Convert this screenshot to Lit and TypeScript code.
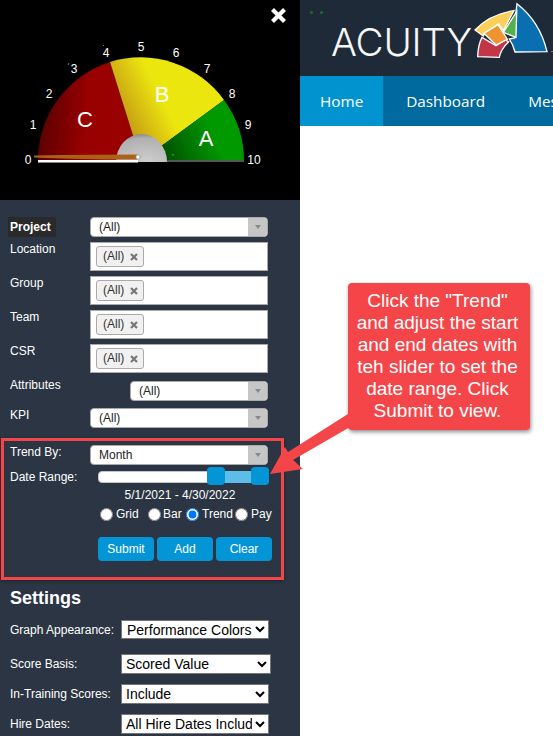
import { LitElement, html, css, svg } from "lit";
import { customElement } from "lit/decorators.js";

@customElement("app-root")
export class AppRoot extends LitElement {
  static styles = css`
    :host { display: block; width: 553px; height: 736px; overflow: hidden; position: relative; background: #fff; font-family: "Liberation Sans", Arial, sans-serif; font-size: 12px; color: #fff; }
    * { box-sizing: border-box; }
    .page { display: flex; width: 553px; height: 736px; overflow: hidden; }
    aside { width: 300px; flex: none; height: 736px; background: #2b3543; overflow: hidden; }
    main { flex: 1; min-width: 0; overflow: hidden; }
    .gauge { display: block; width: 300px; height: 200px; background: #000; }
    .gauge text { font-family: "Liberation Sans", Arial, sans-serif; fill: #fff; text-anchor: middle; }
    .gauge .n { font-size: 12px; }
    .gauge .l { font-size: 22px; }
    .form { padding: 17px 0 0 10px; }
    .row { display: flex; align-items: flex-start; }
    .lab { line-height: 14px; flex: none; width: 80px; }
    .lab.wide { width: 120px; }
    .lab.proj { font-weight: 700; }
    .lab.proj span { display: block; width: 48px; height: 20px; line-height: 20px; background: #2a2a2a; padding-left: 2px; margin-left: -2px; }
    .lab.up { margin-top: -3px; }
    .mt5 { margin-top: 5px; }
    .mt7 { margin-top: 7px; }
    .mt8 { margin-top: 8px; }
    .sel { height: 20px; width: 178px; background: #fff; border: 1px solid #aaa; border-radius: 4px; color: #222; display: flex; align-items: center; padding-left: 8px; position: relative; overflow: hidden; }
    .sel.short { width: 138px; }
    .sel .arr { position: absolute; right: 0; top: 0; bottom: 0; width: 19px; background: #c6c6c6; display: flex; align-items: center; justify-content: center; }
    .sel .arr i { width: 0; height: 0; border: 3px solid transparent; border-top: 4px solid #888; border-bottom: 0; }
    .multi { height: 29px; width: 178px; background: #fff; border: 1px solid #aaa; padding: 3px 5px; }
    .chip { width: 48px; height: 21px; background: #f1f1f1; border: 1px solid #aaa; border-radius: 3px; color: #333; display: flex; align-items: center; justify-content: space-between; padding: 0 5px 2px 6px; }
    .chip svg { display: block; width: 8px; height: 8px; margin-top: 3px; }
    .trend { margin: 10px 0 0 -9px; width: 283px; height: 142px; border: 3px solid #f44649; padding: 4px 0 0 6px; box-shadow: 0 1px 3px rgba(0,0,0,.35); }
    .dr { width: 88px; margin-top: 5px; }
    .slider { width: 171px; height: 18px; position: relative; margin-top: 2px; }
    .track { position: absolute; left: 0; right: 0; top: 3.5px; height: 12px; background: #fff; border: 1px solid #c5c5c5; border-radius: 4px; }
    .fill { position: absolute; left: 118px; width: 45px; top: 3.5px; height: 12px; background: #5dbde9; }
    .h { position: absolute; top: 0; width: 18px; height: 18px; background: #0495d6; border-radius: 4px; }
    .h.a { left: 109px; }
    .h.b { left: 153px; }
    .dates { width: 180px; margin: 3px 0 0 80px; text-align: center; line-height: 14px; }
    .radios { display: flex; align-items: center; height: 16px; margin: 4px 0 0 90px; line-height: 16px; }
    .radios input { margin: 0 3px 0 0; width: 13px; height: 13px; flex: none; }
    .radios span.g { margin-right: 10px; width: 22px; }
    .radios span.b { margin-right: 5px; width: 18px; margin-left: -1px; }
    .radios span.t { margin-right: 3px; width: 30px; }
    .btns { display: flex; gap: 3px; margin: 15px 0 0 88px; }
    .btns span { width: 56px; height: 24px; background: #0495d6; border-radius: 4px; display: flex; align-items: center; justify-content: center; font-size: 12px; }
    h2 { margin: 7px 0 0; font-size: 18px; line-height: 22px; font-weight: 700; }
    .setrow { display: flex; align-items: center; }
    .setrow label { width: 111px; flex: none; line-height: 14px; }
    select { font-family: "Liberation Sans", Arial, sans-serif; font-size: 14px; background: #fff; color: #000; border: 1px solid #767676; border-radius: 0; margin: 0; padding: 0; }
    .s1 { margin-top: 11px; }
    .s1 select { height: 19px; width: 148px; padding-left: 1px; }
    .s2 { margin-top: 15px; }
    .s2 select { height: 20px; width: 149.5px; }
    .s3 { margin-top: 10px; }
    .s3 select { height: 20px; width: 147.5px; }
    header { height: 76px; background: #1f2a38; position: relative; display: flex; align-items: flex-start; }
    .dots { position: absolute; left: 10px; top: 11px; display: flex; gap: 7px; }
    .dots i { width: 3px; height: 3px; border-radius: 50%; background: #0a7a1a; }
    .word { margin: 19px 0 0 31px; font-family: Inter, sans-serif; font-weight: 300; font-size: 38.5px; line-height: 46px; color: #f6f6f6; letter-spacing: -0.2px; }
    .mark { position: absolute; left: 170px; top: 0; width: 83px; height: 64px; }
    nav { height: 50px; background: #00699d; display: flex; align-items: center; font-family: "Open Sans", sans-serif; font-size: 15.3px; white-space: nowrap; }
    nav a { height: 50px; display: flex; align-items: center; padding: 0 21.5px; flex: none; }
    nav a.on { background: #0093d0; padding: 0 20px; margin-right: 1.5px; }
    .callout { position: absolute; left: 348px; top: 283px; width: 182px; height: 147px; background: #f44649; border-radius: 4px; box-shadow: 1px 2px 4px rgba(0,0,0,.45); text-align: center; font-size: 19px; line-height: 22px; padding: 7px 3px 0 0; }
    .arrow { position: absolute; left: 260px; top: 400px; width: 100px; height: 90px; }
    .close { position: absolute; left: 270px; top: 7px; width: 17px; height: 17px; }
  `;

  private sel(v: string, short = false) {
    return html`<div class="sel ${short ? "short" : ""}">${v}<span class="arr"><i></i></span></div>`;
  }

  private multi(name: string) {
    return html`<div class="row mt5"><div class="lab">${name}</div>
      <div class="multi"><div class="chip">(All)<svg viewBox="0 0 8 8"><path d="M1 1L7 7M7 1L1 7" stroke="#777" stroke-width="2.2"/></svg></div></div></div>`;
  }

  private gauge() {
    const nums: [string, number, number][] = [["0",28,164],["1",33,129],["2",49,98],["3",74,73],["4",106,57],["5",141,51],["6",176,57],["7",207,73],["8",232,98],["9",248,129],["10",254,164]];
    return svg`<svg class="gauge" viewBox="0 0 300 200">
      <defs>
        <linearGradient id="gc" x1="0" x2="1" y1="0.3" y2="0.4"><stop offset="0" stop-color="#560000"/><stop offset=".5" stop-color="#990000"/><stop offset="1" stop-color="#9a0000"/></linearGradient>
        <linearGradient id="gb" gradientUnits="userSpaceOnUse" x1="125" y1="125" x2="165" y2="105"><stop offset="0" stop-color="#c49a14"/><stop offset="1" stop-color="#ece60f"/></linearGradient>
        <linearGradient id="ga" gradientUnits="userSpaceOnUse" x1="165" y1="155" x2="215" y2="135"><stop offset="0" stop-color="#005200"/><stop offset="1" stop-color="#009a00"/></linearGradient>
        <radialGradient id="gh" cx=".6" cy="1" r="1"><stop offset="0" stop-color="#cecece"/><stop offset=".85" stop-color="#b0b0b0"/><stop offset="1" stop-color="#8c8c8c"/></radialGradient>
      </defs>
      <path d="M141 161 L38 161 A103 103 0 0 1 110 62 Z" fill="url(#gc)"/>
      <path d="M141 161 L110 62 A103 103 0 0 1 224 100 Z" fill="url(#gb)"/>
      <path d="M141 161 L224 100 A103 103 0 0 1 244 161 Z" fill="url(#ga)"/>
      <rect x="166" y="160" width="78" height="2" fill="#555"/>
      <path d="M116 162 A25.5 28 0 0 1 167 162 Z" fill="url(#gh)"/>
      <rect x="38" y="160" width="100" height="2.5" fill="#fff"/>
      <path d="M34 155.5 L62 155 L137 154.5 L137 159.5 L105 159.5 L62 158.5 L34 157.5 Z" fill="#ab6218"/>
      <circle cx="138" cy="157" r="2.2" fill="#fff" stroke="#888" stroke-width=".7"/>
      <path d="M68 65 L69 63" stroke="#aaa" stroke-width=".7"/><path d="M103 45.5 L104 45.5" stroke="#aaa" stroke-width=".7"/>
      <rect x="172" y="154" width="2" height="1.5" fill="#3a8a3a"/>
      ${nums.map(([t, x, y]) => svg`<text class="n" x=${x} y=${y}>${t}</text>`)}
      <text class="l" x="85" y="127">C</text><text class="l" x="162" y="102">B</text><text class="l" x="206" y="146">A</text>
    </svg>`;
  }

  render() {
    return html`<div class="page">
      <aside>
        ${this.gauge()}
        <div class="form">
          <div class="row"><div class="lab proj"><span>Project</span></div>${this.sel("(All)")}</div>
          ${this.multi("Location")}${this.multi("Group")}${this.multi("Team")}${this.multi("CSR")}
          <div class="row mt8"><div class="lab wide up">Attributes</div>${this.sel("(All)", true)}</div>
          <div class="row mt7"><div class="lab">KPI</div>${this.sel("(All)")}</div>
          <div class="trend">
            <div class="row"><div class="lab">Trend By:</div>${this.sel("Month")}</div>
            <div class="row"><div class="lab dr">Date Range:</div>
              <div class="slider"><div class="track"></div><div class="fill"></div><div class="h a"></div><div class="h b"></div></div></div>
            <div class="dates">5/1/2021 - 4/30/2022</div>
            <div class="radios">
              <input type="radio" name="v"><span class="g">Grid</span>
              <input type="radio" name="v"><span class="b">Bar</span>
              <input type="radio" name="v" checked><span class="t">Trend</span>
              <input type="radio" name="v"><span>Pay</span>
            </div>
            <div class="btns"><span>Submit</span><span>Add</span><span>Clear</span></div>
          </div>
          <h2>Settings</h2>
          <div class="setrow s1"><label>Graph Appearance:</label><select><option>Performance Colors</option></select></div>
          <div class="setrow s2"><label>Score Basis:</label><select><option>Scored Value</option></select></div>
          <div class="setrow s3"><label>In-Training Scores:</label><select><option>Include</option></select></div>
          <div class="setrow s3"><label>Hire Dates:</label><select><option>All Hire Dates Included</option></select></div>
        </div>
      </aside>
      <main>
        <header>
          <div class="dots"><i></i><i></i></div>
          <div class="word">ACUITY</div>
          <svg class="mark" viewBox="0 0 249 192">
            <g stroke="#fff" stroke-width="4" stroke-linejoin="miter">
              <path d="M36 112 Q24 135 23 170 L88 172 Q92 148 116 125 L106 120 L78 137 Z" fill="#c23648"/>
              <path d="M15 90 Q60 42 132 32 L100 92 L86 72 L45 98 L40 108 Z" fill="#fbcf58"/>
              <path d="M42 100 L84 74 L112 118 L78 135 Z" fill="#ee9430"/>
              <path d="M141 11 Q210 65 231 155 L135 156 Q130 135 118 117 L134 114 L138 35 Z" fill="#0a6fb0"/>
              <path d="M140 35 L138 112 L100 97 Z" fill="#55b04a"/>
            </g>
            <rect x="243" y="153" width="6" height="2" fill="#9aa"/>
          </svg>
        </header>
        <nav><a class="on">Home</a><a>Dashboard</a><a>Messages</a></nav>
      </main>
    </div>
    <svg class="close" viewBox="0 0 17 17"><path d="M2.5 2.5L14.5 14.5M14.5 2.5L2.5 14.5" stroke="#fff" stroke-width="4.2"/></svg>
    <div class="callout">Click the "Trend"<br>and adjust the start<br>and end dates with<br>teh slider to set the<br>date range. Click<br>Submit to view.</div>
    <svg class="arrow" viewBox="0 0 100 90"><path d="M88 14 L90 27 L33 60 L43 69 L10 74 L25 47 L28 52 Z" fill="#f44649"/></svg>`;
  }
}
